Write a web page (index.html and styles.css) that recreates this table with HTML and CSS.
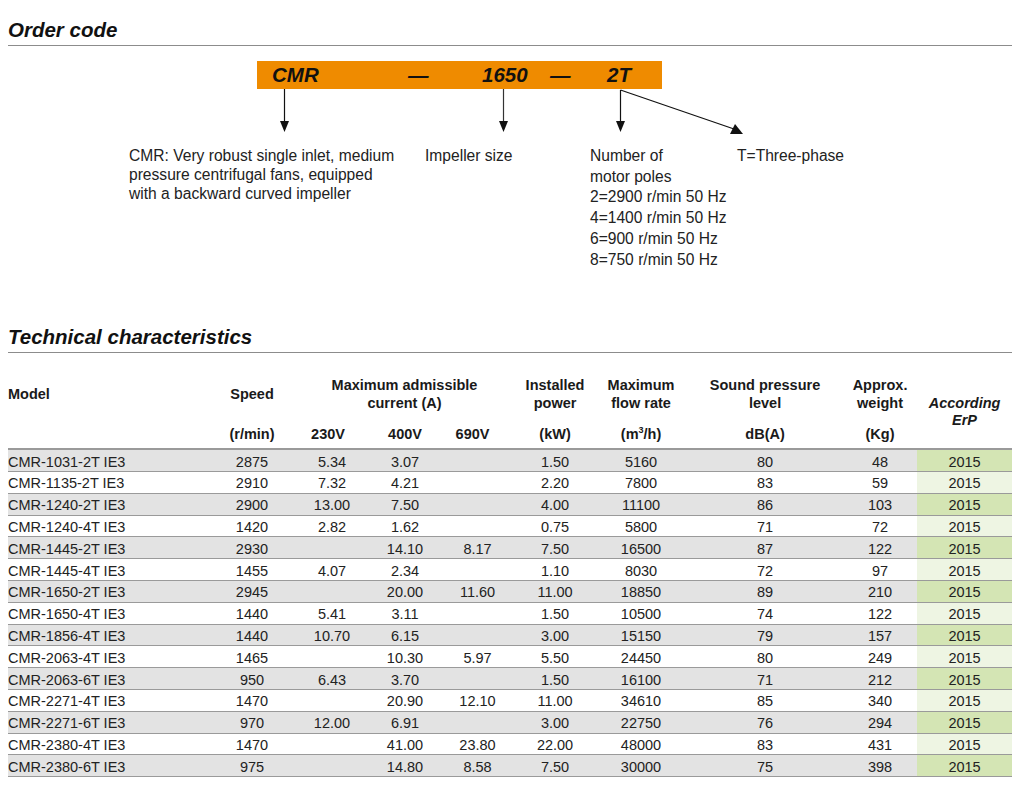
FILE: index.html
```html
<!DOCTYPE html>
<html lang="en">
<head>
    <meta charset="UTF-8">
    <meta name="viewport" content="width=device-width, initial-scale=1.0">
    <title>CMR - Order code and technical characteristics</title>
    <link rel="stylesheet" href="styles.css">
</head>
<body>
    <h2 class="section-title">Order code</h2>

    <div class="code-bar">
        <span class="code-part part-series">CMR</span>
        <span class="code-part part-dash1">—</span>
        <span class="code-part part-size">1650</span>
        <span class="code-part part-dash2">—</span>
        <span class="code-part part-poles">2T</span>
    </div>

    <svg class="code-arrows" width="1004" height="46" viewBox="0 0 1004 46">
        <!-- CMR -->
        <line x1="276.5" y1="0" x2="276.5" y2="33" stroke="#111" stroke-width="1.2"/>
        <polygon points="272,32 281,32 276.5,43" fill="#111"/>
        <!-- 1650 -->
        <line x1="495.5" y1="0" x2="495.5" y2="33" stroke="#333" stroke-width="1.2"/>
        <polygon points="491,32 500,32 495.5,43" fill="#111"/>
        <!-- 2T -->
        <line x1="612.5" y1="1" x2="612.5" y2="33" stroke="#111" stroke-width="1.2"/>
        <polygon points="608,32 617,32 612.5,43" fill="#111"/>
        <line x1="612.5" y1="1" x2="726" y2="40" stroke="#111" stroke-width="1.2"/>
        <polygon points="735,45 722,45 727,35" fill="#111"/>
    </svg>

    <div class="code-notes">
        <div class="note note-series">
            CMR: Very robust single inlet, medium<br>
            pressure centrifugal fans, equipped<br>
            with a backward curved impeller
        </div>
        <div class="note note-size">Impeller size</div>
        <div class="note note-poles">
            Number of<br>
            motor poles<br>
            2=2900 r/min 50 Hz<br>
            4=1400 r/min 50 Hz<br>
            6=900 r/min 50 Hz<br>
            8=750 r/min 50 Hz
        </div>
        <div class="note note-phase">T=Three-phase</div>
    </div>

    <h2 class="section-title tech-title">Technical characteristics</h2>

    <table class="tech-table">
        <colgroup>
            <col style="width:202px">
            <col style="width:84px">
            <col style="width:76px">
            <col style="width:70px">
            <col style="width:75px">
            <col style="width:80px">
            <col style="width:92px">
            <col style="width:156px">
            <col style="width:74px">
            <col style="width:95px">
        </colgroup>
        <thead>
            <tr class="head-main">
                <th class="col-model">Model</th>
                <th>Speed</th>
                <th colspan="3">Maximum admissible<br>current (A)</th>
                <th>Installed<br>power</th>
                <th>Maximum<br>flow rate</th>
                <th>Sound pressure<br>level</th>
                <th>Approx.<br>weight</th>
                <th rowspan="2" class="col-erp">According<br>ErP</th>
            </tr>
            <tr class="head-units">
                <th></th>
                <th>(r/min)</th>
                <th class="u-230">230V</th>
                <th>400V</th>
                <th class="u-690">690V</th>
                <th>(kW)</th>
                <th>(m<sup>3</sup>/h)</th>
                <th>dB(A)</th>
                <th>(Kg)</th>
            </tr>
        </thead>
        <tbody>
            <tr><td class="col-model">CMR-1031-2T IE3</td><td>2875</td><td>5.34</td><td>3.07</td><td></td><td>1.50</td><td>5160</td><td>80</td><td>48</td><td class="erp">2015</td></tr>
            <tr><td class="col-model">CMR-1135-2T IE3</td><td>2910</td><td>7.32</td><td>4.21</td><td></td><td>2.20</td><td>7800</td><td>83</td><td>59</td><td class="erp">2015</td></tr>
            <tr><td class="col-model">CMR-1240-2T IE3</td><td>2900</td><td>13.00</td><td>7.50</td><td></td><td>4.00</td><td>11100</td><td>86</td><td>103</td><td class="erp">2015</td></tr>
            <tr><td class="col-model">CMR-1240-4T IE3</td><td>1420</td><td>2.82</td><td>1.62</td><td></td><td>0.75</td><td>5800</td><td>71</td><td>72</td><td class="erp">2015</td></tr>
            <tr><td class="col-model">CMR-1445-2T IE3</td><td>2930</td><td></td><td>14.10</td><td>8.17</td><td>7.50</td><td>16500</td><td>87</td><td>122</td><td class="erp">2015</td></tr>
            <tr><td class="col-model">CMR-1445-4T IE3</td><td>1455</td><td>4.07</td><td>2.34</td><td></td><td>1.10</td><td>8030</td><td>72</td><td>97</td><td class="erp">2015</td></tr>
            <tr><td class="col-model">CMR-1650-2T IE3</td><td>2945</td><td></td><td>20.00</td><td>11.60</td><td>11.00</td><td>18850</td><td>89</td><td>210</td><td class="erp">2015</td></tr>
            <tr><td class="col-model">CMR-1650-4T IE3</td><td>1440</td><td>5.41</td><td>3.11</td><td></td><td>1.50</td><td>10500</td><td>74</td><td>122</td><td class="erp">2015</td></tr>
            <tr><td class="col-model">CMR-1856-4T IE3</td><td>1440</td><td>10.70</td><td>6.15</td><td></td><td>3.00</td><td>15150</td><td>79</td><td>157</td><td class="erp">2015</td></tr>
            <tr><td class="col-model">CMR-2063-4T IE3</td><td>1465</td><td></td><td>10.30</td><td>5.97</td><td>5.50</td><td>24450</td><td>80</td><td>249</td><td class="erp">2015</td></tr>
            <tr><td class="col-model">CMR-2063-6T IE3</td><td>950</td><td>6.43</td><td>3.70</td><td></td><td>1.50</td><td>16100</td><td>71</td><td>212</td><td class="erp">2015</td></tr>
            <tr><td class="col-model">CMR-2271-4T IE3</td><td>1470</td><td></td><td>20.90</td><td>12.10</td><td>11.00</td><td>34610</td><td>85</td><td>340</td><td class="erp">2015</td></tr>
            <tr><td class="col-model">CMR-2271-6T IE3</td><td>970</td><td>12.00</td><td>6.91</td><td></td><td>3.00</td><td>22750</td><td>76</td><td>294</td><td class="erp">2015</td></tr>
            <tr><td class="col-model">CMR-2380-4T IE3</td><td>1470</td><td></td><td>41.00</td><td>23.80</td><td>22.00</td><td>48000</td><td>83</td><td>431</td><td class="erp">2015</td></tr>
            <tr><td class="col-model">CMR-2380-6T IE3</td><td>975</td><td></td><td>14.80</td><td>8.58</td><td>7.50</td><td>30000</td><td>75</td><td>398</td><td class="erp">2015</td></tr>
        </tbody>
    </table>
</body>
</html>
```

FILE: styles.css
```css
html, body {
    margin: 0;
    padding: 0;
}
body {
    font-family: "Liberation Sans", Arial, sans-serif;
    color: #222;
    background: #fff;
    padding: 0 8px;
}
.section-title {
    margin: 18px 0 0 0;
    padding-bottom: 3px;
    font-size: 20.5px;
    line-height: 24px;
    font-weight: bold;
    font-style: italic;
    color: #111;
    border-bottom: 1px solid #8c8c8c;
}
.tech-title {
    margin-top: 55px;
}

/* order code diagram */
.code-bar {
    display: flex;
    margin: 15px 0 0 249px;
    width: 405px;
    height: 28px;
    padding-left: 15px;
    box-sizing: border-box;
    background-color: #ef8b00;
    font-size: 20.5px;
    line-height: 28px;
    font-weight: bold;
    font-style: italic;
    color: #111;
}
.part-series { width: 136px; }
.part-dash1 { width: 74px; }
.part-size { width: 68px; }
.part-dash2 { width: 57px; }
.code-arrows {
    display: block;
}
.code-notes {
    display: flex;
    margin-top: 11px;
    padding-left: 121px;
    font-size: 15.6px;
    line-height: 19px;
    color: #222;
}
.note-series { width: 296px; }
.note-size { width: 165px; }
.note-poles {
    width: 147px;
    line-height: 20.7px;
}

/* technical table */
.tech-table {
    margin-top: 22px;
    width: 1004px;
    table-layout: fixed;
    border-collapse: collapse;
    font-size: 14.5px;
}
.tech-table th {
    font-weight: bold;
    color: #1a1a1a;
    text-align: center;
    padding: 0;
    line-height: 18px;
}
.head-main th {
    height: 38px;
    vertical-align: middle;
}
.head-units th {
    height: 30px;
    vertical-align: bottom;
    padding-bottom: 5px;
    border-bottom: 2px solid #9a9a9a;
}
.tech-table th.col-erp {
    font-style: italic;
    vertical-align: middle;
    border-bottom: 2px solid #9a9a9a;
    line-height: 17px;
}
.head-units .u-230 { padding-right: 8px; }
.head-units .u-690 { padding-right: 10px; }
.tech-table sup {
    font-size: 9px;
    line-height: 0;
}
.tech-table .col-model {
    text-align: left;
}
.tech-table td {
    height: 18.8px;
    padding: 2px 0 0 0;
    text-align: center;
    line-height: 18px;
    border-bottom: 1px solid #9a9a9a;
    color: #222;
}
.tech-table tbody tr:nth-child(odd) {
    background-color: #e3e3e3;
}
.tech-table tbody tr:nth-child(odd) .erp {
    background-color: #d4e5b4;
}
.tech-table tbody tr:nth-child(even) .erp {
    background-color: #eef5e3;
}
```
